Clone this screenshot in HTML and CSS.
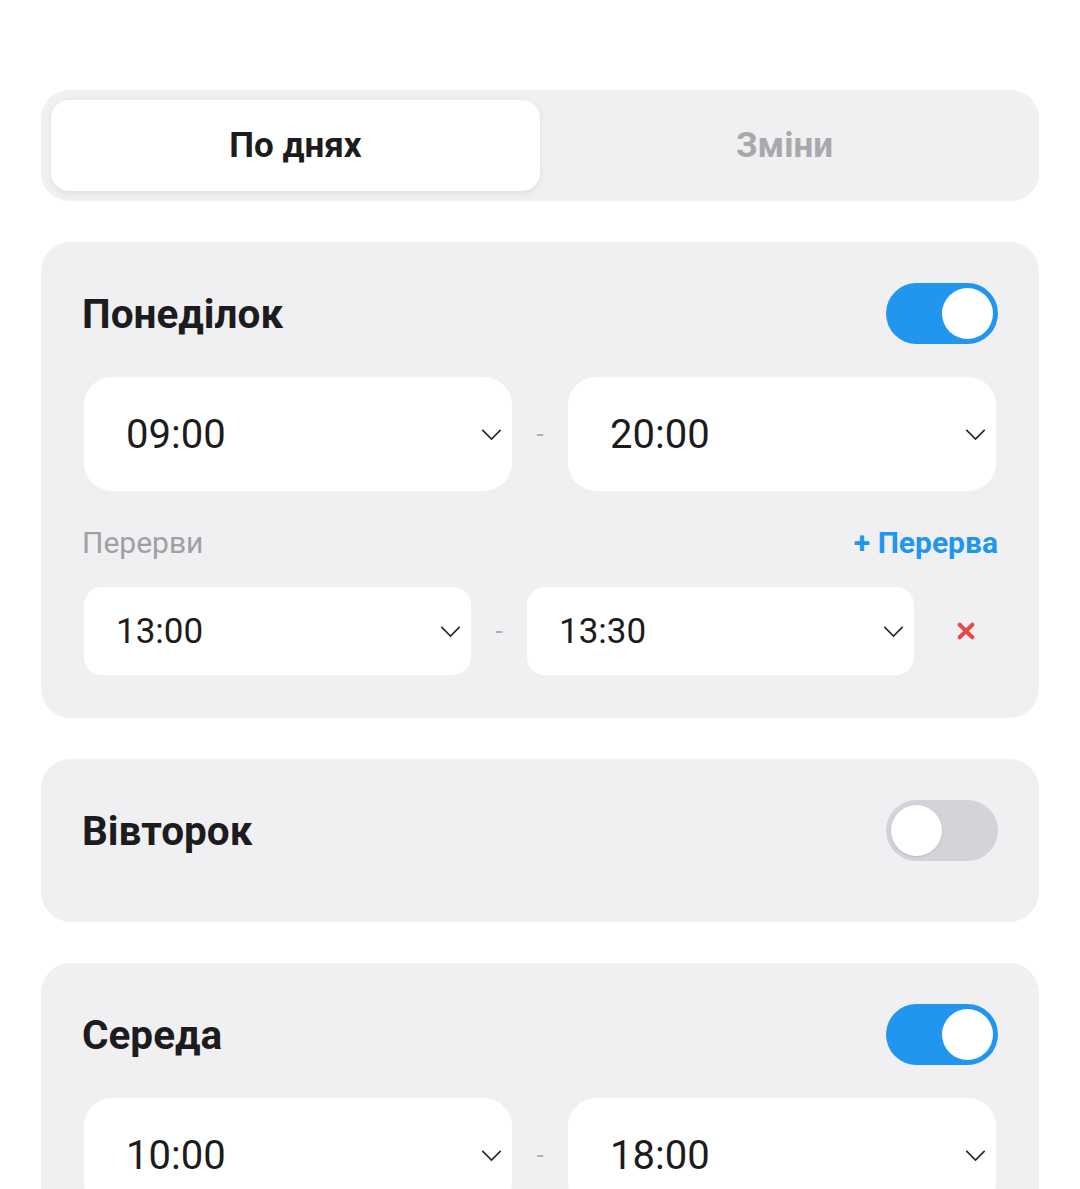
FILE: index.html
```html
<!DOCTYPE html>
<html lang="uk">
<head>
    <meta charset="UTF-8">
    <meta name="viewport" content="width=device-width, initial-scale=1.0">
    <title>Графік роботи</title>
    <link rel="stylesheet" href="styles.css">
</head>
<body>
    <div class="schedule">
        <div class="tabs">
            <div class="tab tab-active">По днях</div>
            <div class="tab">Зміни</div>
        </div>

        <div class="day-card">
            <div class="day-header">
                <h2 class="day-title">Понеділок</h2>
                <span class="switch switch-on"><span class="knob"></span></span>
            </div>
            <div class="time-row">
                <div class="time-select">
                    <span>09:00</span>
                    <svg class="chevron" viewBox="0 0 22 12"><path d="M1 1l10 10 10-10"/></svg>
                </div>
                <span class="dash">-</span>
                <div class="time-select">
                    <span>20:00</span>
                    <svg class="chevron" viewBox="0 0 22 12"><path d="M1 1l10 10 10-10"/></svg>
                </div>
            </div>
            <div class="breaks-head">
                <span class="breaks-label">Перерви</span>
                <span class="add-break">+ Перерва</span>
            </div>
            <div class="break-row">
                <div class="time-select small">
                    <span>13:00</span>
                    <svg class="chevron" viewBox="0 0 22 12"><path d="M1 1l10 10 10-10"/></svg>
                </div>
                <span class="dash">-</span>
                <div class="time-select small">
                    <span>13:30</span>
                    <svg class="chevron" viewBox="0 0 22 12"><path d="M1 1l10 10 10-10"/></svg>
                </div>
                <span class="remove-break">
                    <svg viewBox="0 0 20 20"><path d="M3 3l14 14M17 3L3 17"/></svg>
                </span>
            </div>
        </div>

        <div class="day-card day-off">
            <div class="day-header">
                <h2 class="day-title">Вівторок</h2>
                <span class="switch"><span class="knob"></span></span>
            </div>
        </div>

        <div class="day-card">
            <div class="day-header">
                <h2 class="day-title">Середа</h2>
                <span class="switch switch-on"><span class="knob"></span></span>
            </div>
            <div class="time-row">
                <div class="time-select">
                    <span>10:00</span>
                    <svg class="chevron" viewBox="0 0 22 12"><path d="M1 1l10 10 10-10"/></svg>
                </div>
                <span class="dash">-</span>
                <div class="time-select">
                    <span>18:00</span>
                    <svg class="chevron" viewBox="0 0 22 12"><path d="M1 1l10 10 10-10"/></svg>
                </div>
            </div>
        </div>
    </div>
</body>
</html>
```

FILE: styles.css
```css
* {
    box-sizing: border-box;
}

body {
    margin: 0;
    background-color: #ffffff;
    font-family: Roboto, "Noto Sans", sans-serif;
    color: #1c1c1e;
}

.schedule {
    padding: 90px 41px 40px 41px;
}

/* segmented tabs */
.tabs {
    display: flex;
    padding: 10px;
    height: 111px;
    background-color: #f0f0f2;
    border-radius: 28px;
}

.tab {
    flex: 1;
    display: flex;
    align-items: center;
    justify-content: center;
    font-size: 35px;
    font-weight: 700;
    color: #a9a9ad;
    border-radius: 18px;
}

.tab-active {
    background-color: #ffffff;
    color: #1c1c1e;
    box-shadow: 0 2px 6px rgba(0, 0, 0, 0.08);
}

/* day cards */
.day-card {
    margin-top: 41px;
    padding: 41px 41px 43px 41px;
    background-color: #f0f0f2;
    border-radius: 30px;
}

.day-off {
    padding-bottom: 61px;
}

.day-header {
    display: flex;
    align-items: center;
    justify-content: space-between;
    height: 61px;
}

.day-title {
    margin: 0;
    font-size: 40.5px;
    font-weight: 700;
    color: #1c1c1e;
}

.switch {
    position: relative;
    width: 112px;
    height: 61px;
    border-radius: 31px;
    background-color: #d2d4d9;
}

.switch .knob {
    position: absolute;
    top: 5px;
    left: 5px;
    width: 51px;
    height: 51px;
    border-radius: 50%;
    background-color: #ffffff;
    box-shadow: 0 1px 3px rgba(0, 0, 0, 0.12);
}

.switch-on {
    background-color: #2196ef;
}

.switch-on .knob {
    left: 56px;
    box-shadow: none;
}

/* time selects */
.time-row {
    display: flex;
    align-items: center;
    margin-top: 33px;
    padding: 0 2px;
}

.time-select {
    flex: 1;
    display: flex;
    align-items: center;
    justify-content: space-between;
    height: 114px;
    padding: 0 10px 0 42px;
    background-color: #ffffff;
    border-radius: 28px;
    font-size: 40px;
    color: #1c1c1e;
}

.time-select.small {
    height: 88px;
    padding-left: 32px;
    border-radius: 18px;
    font-size: 35px;
}

.chevron {
    width: 21px;
    height: 11px;
    fill: none;
    stroke: #2a2a2c;
    stroke-width: 1.8;
}

.dash {
    width: 56px;
    text-align: center;
    font-size: 26px;
    color: #b0b0b4;
}

/* breaks */
.breaks-head {
    display: flex;
    align-items: center;
    justify-content: space-between;
    margin-top: 34px;
    height: 34px;
}

.breaks-label {
    font-size: 30px;
    color: #a0a0a4;
}

.add-break {
    font-size: 30px;
    font-weight: 700;
    color: #2196ef;
}

.break-row {
    display: flex;
    align-items: center;
    margin-top: 28px;
    padding-left: 2px;
}

.break-row .time-select {
    flex: 0 0 387px;
}

.remove-break {
    display: flex;
    align-items: center;
    justify-content: center;
    width: 64px;
    margin-left: 20px;
}

.remove-break svg {
    width: 18px;
    height: 18px;
    fill: none;
    stroke: #e5484d;
    stroke-width: 4.5;
    stroke-linecap: round;
}
```
